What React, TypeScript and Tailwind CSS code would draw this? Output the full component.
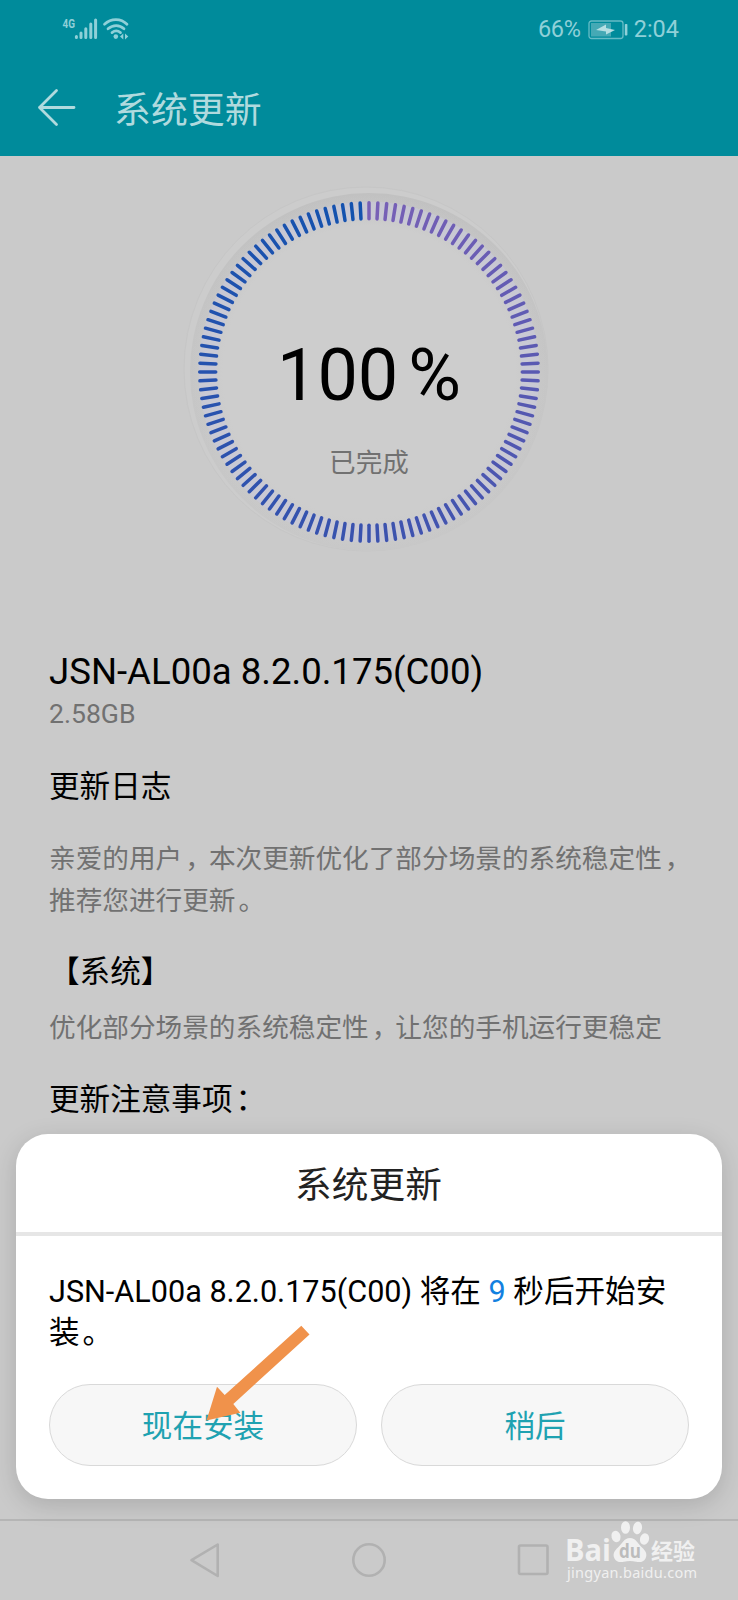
const baseFont = "font-['Roboto','Noto_Sans_CJK_SC',sans-serif]";

function mix(a: number[], b: number[], t: number) {
  return `rgb(${a.map((v, i) => Math.round(v + (b[i] - v) * t)).join(',')})`;
}

function tickColor(i: number) {
  const t = i / 120;
  const violet = [120, 96, 182];
  const indigo = [58, 82, 174];
  const blue = [18, 82, 174];
  return t < 0.5 ? mix(violet, indigo, t * 2) : mix(indigo, blue, (t - 0.5) * 2);
}

function Punct({ children }: { children: string }) {
  return <span className="-mr-[3px] ml-[3px]">{children}</span>;
}

function StatusBar() {
  return (
    <div className="flex h-[60px] items-start justify-between pl-[62px] pr-[59px] text-[#8fd0d8]">
      <svg width="70" height="30" viewBox="0 0 70 30" className="mt-[14px]" fill="none">
        <text x="0.5" y="13.500" fontSize="13.500" fontWeight="700" textLength="12.500" lengthAdjust="spacingAndGlyphs" fill="currentColor" fontFamily="Roboto, sans-serif">4G</text>
        <g stroke="currentColor" strokeWidth="3" strokeLinecap="round">
          <path d="M14.400 22.600v1M19 19v4.600M23.800 14.800v8.800M28.800 10v13.600M33.600 6v17.600" />
        </g>
        <g stroke="currentColor" strokeWidth="2.700" strokeLinecap="round">
          <path d="M42.500 10.300C49 4 59 4 65 10.300M46 14.800c5-4.300 11.500-4.300 16 0M50 18.600c2.500-2 6-2 8.500 0" />
        </g>
        <circle cx="53.800" cy="22.600" r="2.300" fill="currentColor" />
        <path d="M61.300 19.500v6l-3.300-3zM63 19.500v6l3.300-3z" fill="currentColor" />
      </svg>
      <div className="mt-[15px] flex h-[29px] items-center font-[Roboto,sans-serif] text-[23.500px]">
        <span className="tracking-[-0.3px]">66%</span>
        <svg width="40" height="20" viewBox="0 0 40 20" className="ml-[7px] mr-[6px]" fill="none">
          <rect x="1" y="1" width="34" height="17.500" rx="2.500" stroke="#66bcc6" strokeWidth="1.300" />
          <rect x="3" y="3" width="20" height="13.500" fill="#45a9b5" />
          <path d="M8 10l10-5.500v3.500l9 2-9 4.500v-3z" fill="#b5dfe3" />
          <rect x="36.800" y="4" width="2.600" height="11.500" rx="0.800" fill="#8fd0d8" />
        </svg>
        <span>2:04</span>
      </div>
    </div>
  );
}

function ProgressRing() {
  return (
    <div className="relative mx-auto h-[380px] w-[380px]">
      <svg width="380" height="380" viewBox="-190 -190 380 380">
        <defs>
          <linearGradient id="rim" x1="0" y1="0" x2="0" y2="1">
            <stop offset="0" stopColor="#c1c1c1" />
            <stop offset="0.5" stopColor="#c6c6c6" />
            <stop offset="1" stopColor="#c8c8c8" />
          </linearGradient>
          <radialGradient id="face">
            <stop offset="0.820" stopColor="#cdcdcd" />
            <stop offset="1" stopColor="#cdcdcd" stopOpacity="0" />
          </radialGradient>
        </defs>
        <circle cx="-3" cy="-3" r="182" fill="#cccccc" stroke="#c6c6c6" strokeWidth="1" />
        <circle r="179" fill="url(#rim)" />
        <circle r="178" fill="url(#face)" />
        <circle r="161.500" fill="none" stroke="#c9c9dc" strokeWidth="18" opacity="0.550" />
        {Array.from({ length: 120 }, (_, i) => (
          <line key={i} y1="-169.300" y2="-153.300" stroke={tickColor(i)} strokeWidth="3.500" strokeLinecap="round" transform={`rotate(${i * 3})`} />
        ))}
      </svg>
      <div className="absolute inset-0 flex flex-col items-center">
        <div className="mt-[152px] flex gap-[10px] font-[Roboto,sans-serif] text-[72px] leading-[84px] text-black">
          <span>100</span>
          <span>%</span>
        </div>
        <div className="mt-[25px] text-[26.600px] leading-[40px] text-[#717171]">已完成</div>
      </div>
    </div>
  );
}

function PillButton({ children }: { children: string }) {
  return (
    <button className="flex h-[82px] flex-1 items-center justify-center rounded-full border border-[#d9d9d9] bg-[#f7f7f7] pt-[3px] text-[30.600px] text-[#1fa2b1]">
      {children}
    </button>
  );
}

function UpdateDialog() {
  return (
    <div className="absolute left-[16px] top-[1134px] flex h-[365px] w-[706px] flex-col rounded-[32px] bg-white shadow-[0_6px_24px_rgba(0,0,0,0.150)]">
      <div className="flex h-[98px] items-center justify-center pr-[1px] pt-[6px] text-[36.700px] text-[#222]">系统更新</div>
      <div className="h-[4px] bg-[#e6e6e6]" />
      <p className="mt-[35px] px-[33px] text-[30.600px] leading-[41px] text-black">
        JSN-AL00a 8.2.0.175(C00) 将在 <span className="text-[#1280e0]">9</span> 秒后开始安装<Punct>。</Punct>
      </p>
      <div className="mb-[33px] mt-auto flex gap-[24px] px-[33px]">
        <PillButton>现在安装</PillButton>
        <PillButton>稍后</PillButton>
      </div>
      <svg className="absolute left-[184px] top-[186px]" width="116" height="106" viewBox="200 1320 116 106">
        <path d="M301.300 1325.700L309.500 1334.500L233.300 1404L240.300 1412.700L206.500 1420.500L217 1386.700L224.700 1395z" fill="#f0924b" />
      </svg>
    </div>
  );
}

function Watermark() {
  return (
    <svg className="absolute left-[560px] top-[1512px]" width="150" height="80" viewBox="560 1512 150 80" fill="#f0f0f0">
      <text x="565" y="1560.500" fontSize="29.500" fontWeight="700" textLength="46" lengthAdjust="spacingAndGlyphs" fontFamily="Open Sans, sans-serif">Bai</text>
      <ellipse cx="616" cy="1536.500" rx="4.500" ry="5.800" transform="rotate(-15 616 1536.500)" />
      <ellipse cx="625.500" cy="1527.500" rx="4.500" ry="6.300" />
      <ellipse cx="637.500" cy="1528" rx="4.500" ry="6.300" transform="rotate(10 637.500 1528)" />
      <ellipse cx="644.500" cy="1539" rx="4.500" ry="5.800" transform="rotate(15 644.500 1539)" />
      <path d="M630 1538c6 0 8 6 12 9.500s5.500 7 3.500 11-6 4-9.500 3.200-8.500-.8-12 0-7.500.8-9.500-3.200-.5-7.500 3.500-11 6-9.500 12-9.500z" />
      <text x="619" y="1557.500" fontSize="19" fontWeight="700" fill="#bcbcbc" textLength="22" lengthAdjust="spacingAndGlyphs" fontFamily="Open Sans, sans-serif">du</text>
      <text x="651" y="1559" fontSize="22" fontWeight="700" fontFamily="Noto Sans CJK SC, sans-serif">经验</text>
      <text x="567" y="1577.500" fontSize="14.500" textLength="130" fontFamily="Noto Sans, sans-serif">jingyan.baidu.com</text>
    </svg>
  );
}

function NavBar() {
  return (
    <div className="flex h-[81px] items-center justify-between border-t-2 border-[#b5b5b5] pb-[2px] pl-[188px] pr-[188px]">
      <svg width="34" height="38" viewBox="0 0 34 38" fill="none" stroke="#b1b1b1" strokeWidth="2.600" strokeLinejoin="round">
        <path d="M29.700 3.500v31.500L3.500 19.200z" />
      </svg>
      <svg width="36" height="36" viewBox="0 0 36 36" fill="none" stroke="#b1b1b1" strokeWidth="2.600">
        <circle cx="18" cy="18" r="15.700" />
      </svg>
      <svg width="34" height="34" viewBox="0 0 34 34" fill="none" stroke="#b1b1b1" strokeWidth="2.600">
        <rect x="3" y="2.500" width="28.500" height="28.500" rx="1.500" />
      </svg>
    </div>
  );
}

export default function App() {
  return (
    <div className={`relative flex h-[1600px] w-[738px] flex-col overflow-hidden bg-[#cacaca] ${baseFont}`}>
      <header className="h-[156px] bg-[#008b9b]">
        <StatusBar />
        <div className="flex h-[96px] items-center pl-[37px] text-[#b0dade]">
          <svg width="39" height="40" viewBox="0 0 39 40" fill="none" stroke="currentColor" strokeWidth="2.800" strokeLinecap="round" strokeLinejoin="round">
            <path d="M37 19.500H2.500M19.500 2.500L2.500 19.500L19.500 36.500" />
          </svg>
          <h1 className="ml-[38px] pt-[5px] text-[36.900px]">系统更新</h1>
        </div>
      </header>
      <main className="flex-1 px-[49px] pt-[26px]">
        <ProgressRing />
        <h2 className="mt-[88px] text-[36.600px] leading-[44px] text-black">JSN-AL00a 8.2.0.175(C00)</h2>
        <p className="mt-[4px] text-[26.600px] leading-[32px] text-[#717171]">2.58GB</p>
        <h3 className="mt-[37px] text-[30.600px] leading-[40px] text-black">更新日志</h3>
        <p className="mt-[31px] whitespace-nowrap text-[26.650px] leading-[42px] text-[#717171]">
          亲爱的用户<Punct>，</Punct>本次更新优化了部分场景的系统稳定性<Punct>，</Punct>
          <br />
          推荐您进行更新<Punct>。</Punct>
        </p>
        <h3 className="mt-[30px] text-[30.600px] leading-[40px] text-black">【系统】</h3>
        <p className="mt-[16px] whitespace-nowrap text-[26.650px] leading-[40px] text-[#717171]">
          优化部分场景的系统稳定性<Punct>，</Punct>让您的手机运行更稳定
        </p>
        <h3 className="mt-[32px] text-[30.600px] leading-[40px] text-black">
          更新注意事项<Punct>：</Punct>
        </h3>
      </main>
      <NavBar />
      <UpdateDialog />
      <Watermark />
    </div>
  );
}
